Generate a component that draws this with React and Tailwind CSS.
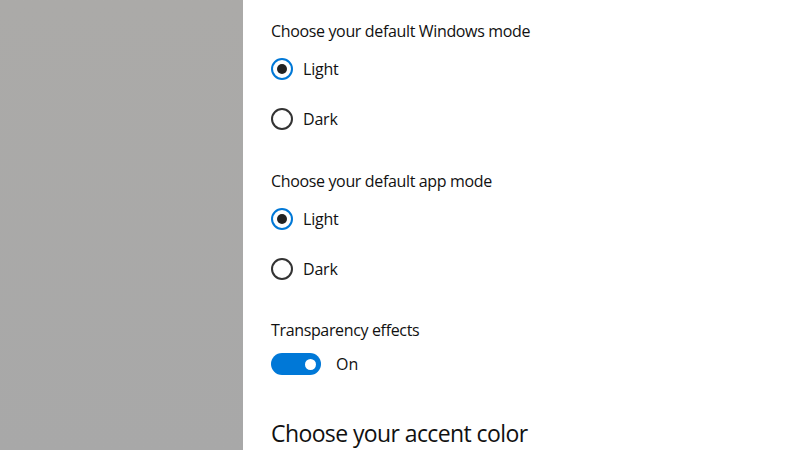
import React from "react";

function Radio({ checked, label }) {
  return (
    <div className="flex items-center h-[22px]">
      {checked ? (
        <span className="w-[22px] h-[22px] rounded-full border-[2px] border-[#0078d7] flex items-center justify-center">
          <span className="w-[10px] h-[10px] rounded-full bg-[#222]" />
        </span>
      ) : (
        <span className="w-[22px] h-[22px] rounded-full border-[2px] border-[#333]" />
      )}
      <span className="ml-[10px] text-[16px] tracking-[-0.2px] text-[#111]">{label}</span>
    </div>
  );
}

export default function App() {
  return (
    <div
      className="w-[800px] h-[450px] flex overflow-hidden bg-white"
      style={{ fontFamily: '"Open Sans", "Noto Sans", sans-serif' }}
    >
      {/* left blurred pane */}
      <div className="w-[243px] h-full bg-gradient-to-b from-[#abaaa8] to-[#a8a8a8]" />

      {/* settings */}
      <div className="flex-1 pl-[28px] pt-[20px] text-[#111]">
        <div className="text-[16px] leading-[22px] tracking-[-0.35px]">Choose your default Windows mode</div>
        <div className="mt-[16px] flex flex-col gap-[28px]">
          <Radio checked label="Light" />
          <Radio label="Dark" />
        </div>

        <div className="mt-[40px] text-[16px] leading-[22px] tracking-[-0.35px]">Choose your default app mode</div>
        <div className="mt-[16px] flex flex-col gap-[28px]">
          <Radio checked label="Light" />
          <Radio label="Dark" />
        </div>

        <div className="mt-[39px] text-[16px] leading-[22px] tracking-[-0.35px]">Transparency effects</div>
        <div className="mt-[12px] flex items-center h-[22px]">
          <span className="w-[50px] h-[22px] rounded-full bg-[#0078d7] flex items-center justify-end pr-[5px]">
            <span className="w-[11px] h-[11px] rounded-full bg-white" />
          </span>
          <span className="ml-[15px] text-[16px]">On</span>
        </div>

        <div className="mt-[43px] text-[23px] leading-[30px] tracking-[-0.6px] text-[#111]">Choose your accent color</div>
      </div>
    </div>
  );
}
